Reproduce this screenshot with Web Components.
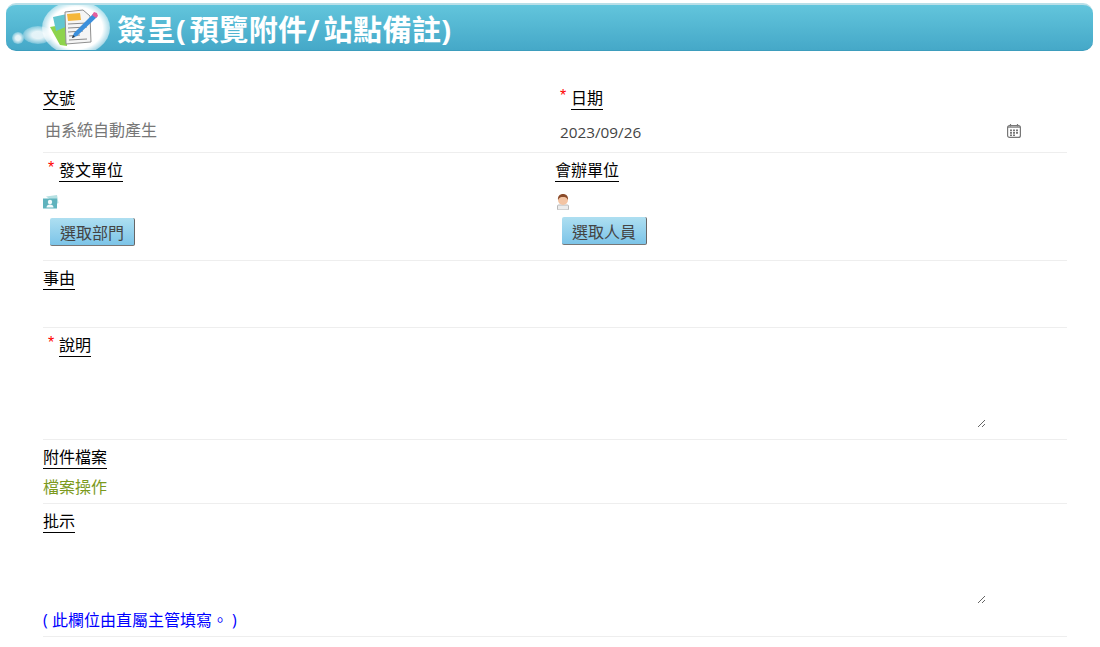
<!DOCTYPE html>
<html lang="zh-Hant">
<head>
<meta charset="utf-8">
<title>簽呈</title>
<style>
html, body { margin: 0; padding: 0; background: #fff; }
body { font-family: "Open Sans", "Noto Sans CJK TC", sans-serif; font-size: 16px; color: #333; }
</style>
</head>
<body>
<sign-form></sign-form>

<script>
const FONT = '"Open Sans", "Noto Sans CJK TC", sans-serif';

class TitleBanner extends HTMLElement {
    constructor() {
        super();
        this.attachShadow({mode: 'open'});
        this.shadowRoot.innerHTML = `
        <style>
        :host { display: block; height: 51px; padding: 3px 7px 0 6px; box-sizing: border-box; }
        .bar {
            position: relative; height: 48px; box-sizing: border-box; overflow: hidden;
            display: flex; align-items: center; padding-left: 111px;
            border-radius: 10px;
            border-top: 2px solid #b9dfe8;
            border-bottom: 1px solid #3d9dbd;
            background: linear-gradient(#62c5dc, #45a8c8);
            color: #fff; font-size: 29px; font-weight: 700; line-height: 1;
        }
        svg { position: absolute; left: 0; top: -2px; }
        span { position: relative; padding-top: 4px; }
        </style>
        <div class="bar">
            <svg width="112" height="48" viewBox="6 3 112 48">
                <defs>
                    <radialGradient id="cl"><stop offset="0.78" stop-color="#fff"/><stop offset="1" stop-color="#fff" stop-opacity="0.5"/></radialGradient>
                    <radialGradient id="sm"><stop offset="0.4" stop-color="#fff" stop-opacity="0.85"/><stop offset="1" stop-color="#fff" stop-opacity="0.25"/></radialGradient>
                </defs>
                <circle cx="18" cy="38" r="6" fill="url(#sm)"/>
                <ellipse cx="38" cy="35" rx="15" ry="9" fill="url(#sm)"/>
                <ellipse cx="76" cy="28" rx="34" ry="27" fill="url(#cl)"/>
                <path d="M50 27l17-3v22l-7-1z" fill="#8ed34c"/>
                <path d="M53 17l14-3 1 12-12 5z" fill="#62c6d0"/>
                <path d="M65 12l18-2 7 6 1 26-25 2z" fill="#f5f5f5" stroke="#8f8f8f" stroke-width="1"/>
                <path d="M67 14l13-1 1 7-13 1z" fill="#f5b73a"/>
                <path d="M68 24l19-1M68 28l19-1M68 32l15-1M69 36l11-1M69 40l18-1" stroke="#8a8a8a" stroke-width="1"/>
                <path d="M93 14l4 3-20 19-5 2 2-5z" fill="#3a8fdc"/>
                <path d="M92 15l2-3 3 1 1 3-2 2z" fill="#e4609f"/>
                <path d="M72 38l1-3 2 2z" fill="#333"/>
            </svg>
            <span><slot></slot></span>
        </div>`;
    }
}

class FieldLabel extends HTMLElement {
    constructor() {
        super();
        this.attachShadow({mode: 'open'});
        this.shadowRoot.innerHTML = `
        <style>
        :host { display: flex; width: max-content; align-items: flex-start; color: #000; font-size: 16px; line-height: 20px; }
        .mark { color: #f00; width: 16px; padding-left: 5px; box-sizing: border-box; font: 16px/15px "Liberation Sans", sans-serif; }
        .text { border-bottom: 1px solid #000; height: 21px; }
        </style>
        <span class="mark"></span><span class="text"><slot></slot></span>`;
    }
    connectedCallback() {
        const mark = this.shadowRoot.querySelector('.mark');
        if (this.hasAttribute('required')) mark.textContent = '*';
        else mark.remove();
    }
}

class PickButton extends HTMLElement {
    constructor() {
        super();
        this.attachShadow({mode: 'open'});
        this.shadowRoot.innerHTML = `
        <style>
        :host { display: block; width: max-content; }
        button {
            display: block; width: 85px; height: 28px; padding: 0; margin: 0; box-sizing: border-box;
            border: none; border-radius: 2px; font: 16px ${FONT}; color: #444;
            border-right: 1px solid #666; border-bottom: 1px solid #777;
            background: linear-gradient(#aedff1, #7cc4e8);
        }
        </style>
        <button type="button"><slot></slot></button>`;
    }
}

class FormRow extends HTMLElement {
    constructor() {
        super();
        this.attachShadow({mode: 'open'});
        this.shadowRoot.innerHTML = `
        <style>
        :host { display: grid; grid-template-columns: 512px 1fr; box-sizing: border-box; border-bottom: 1px solid #eee; }
        </style>
        <slot></slot>`;
    }
}

class SignForm extends HTMLElement {
    constructor() {
        super();
        this.attachShadow({mode: 'open'});
        this.shadowRoot.innerHTML = `
        <style>
        :host { display: block; font: 16px ${FONT}; color: #333; }
        main { padding: 0 33px 0 43px; }
        .cell { min-width: 0; }
        .full { grid-column: 1 / -1; }
        .title { letter-spacing: 0.45px; }
        .p { letter-spacing: 4px; }
        .r1 { height: 102px; padding-top: 37px; box-sizing: border-box; }
        .r2 { height: 108px; padding-top: 7px; }
        .r3 { height: 67px; padding-top: 7px; }
        .r4 { height: 112px; padding-top: 7px; }
        .r5 { height: 64px; padding-top: 7px; }
        .r6 { height: 133px; padding-top: 7px; }
        .value { margin: 10px 0 0 2px; color: #777; line-height: 20px; }
        .date { display: flex; align-items: center; margin: 12px 46px 0 5px; height: 20px; }
        .date span { flex: 1; color: #444; font-size: 15.3px; }
        .date svg { margin-top: -2px; }
        .icon { display: block; margin-top: 13px; }
        .btn { margin: 9px 0 0 7px; }
        .area { display: block; width: 943px; height: 60px; margin: 11px 0 0; padding: 0; border: none; outline: none; background: transparent; }
        .files { margin-top: 9px; color: #7c9a1e; line-height: 20px; }
        .hint { color: #00f; line-height: 20px; margin-top: 6px; }
        </style>
        <main>
            <title-banner class="title" style="margin:0 -33px 0 -43px">簽呈<span class="p">(</span>預覽附件<span class="p">/</span>站點備註<span class="p">)</span></title-banner>
            <form-row class="r1">
                <div class="cell"><field-label>文號</field-label><div class="value">由系統自動產生</div></div>
                <div class="cell"><field-label required>日期</field-label>
                    <div class="date"><span>2023/09/26</span>
                        <svg width="14" height="14" viewBox="0 0 14 14" fill="none">
                            <rect x="0.6" y="1.6" width="12.800" height="11.800" rx="2" stroke="#777" stroke-width="1.2"/>
                            <path d="M1 2.500h12v1.200H1z" fill="#777"/>
                            <path d="M3.500 0v2.500M10.500 0v2.500" stroke="#777" stroke-width="1.200"/>
                            <path d="M3 5.500h2v1.700H3zM6 5.500h2v1.700H6zM9 5.500h2v1.700H9zM3 8h2v1.700H3zM6 8h2v1.700H6zM9 8h2v1.700H9zM3 10.500h2v1.500H3zM6 10.500h2v1.500H6z" fill="#777"/>
                        </svg>
                    </div>
                </div>
            </form-row>
            <form-row class="r2">
                <div class="cell"><field-label required>發文單位</field-label>
                    <svg class="icon" width="16" height="14" viewBox="0 0 16 14">
                        <path d="M3 1.500L14 0l1.500 8-2 1z" fill="#b5e0e2"/>
                        <rect x="0" y="3.500" width="14" height="10" fill="#5fb3bd"/>
                        <circle cx="7" cy="7" r="2.200" fill="#f2fbfb"/>
                        <path d="M3.500 12.500c0-2 1.500-3 3.500-3s3.500 1 3.500 3z" fill="#f2fbfb"/>
                    </svg>
                    <pick-button class="btn">選取部門</pick-button>
                </div>
                <div class="cell"><field-label>會辦單位</field-label>
                    <svg class="icon" width="14" height="16" viewBox="0 0 14 16" style="margin:12px 0 0 1px">
                        <rect x="1.500" y="11" width="11" height="5" rx="1" fill="#ececec" stroke="#aaa" stroke-width="0.8"/>
                        <circle cx="7" cy="6" r="5" fill="#f3c4a3"/>
                        <path d="M2 6C1.500 2 4 0 7 0s5.500 2 5 6C11 3.500 9 3 7 3S3 3.500 2 6z" fill="#8a4b2a"/>
                    </svg>
                    <pick-button class="btn" style="margin-top:7px">選取人員</pick-button>
                </div>
            </form-row>
            <form-row class="r3"><div class="cell full"><field-label>事由</field-label></div></form-row>
            <form-row class="r4"><div class="cell full"><field-label required>說明</field-label>
                <textarea class="area"></textarea></div></form-row>
            <form-row class="r5"><div class="cell full"><field-label>附件檔案</field-label>
                <div class="files" style="margin-top:8px">檔案操作</div></div></form-row>
            <form-row class="r6"><div class="cell full"><field-label>批示</field-label>
                <textarea class="area"></textarea>
                <div class="hint">( 此欄位由直屬主管填寫。 )</div></div></form-row>
        </main>`;
    }
}

customElements.define('title-banner', TitleBanner);
customElements.define('field-label', FieldLabel);
customElements.define('pick-button', PickButton);
customElements.define('form-row', FormRow);
customElements.define('sign-form', SignForm);
</script>
</body>
</html>
